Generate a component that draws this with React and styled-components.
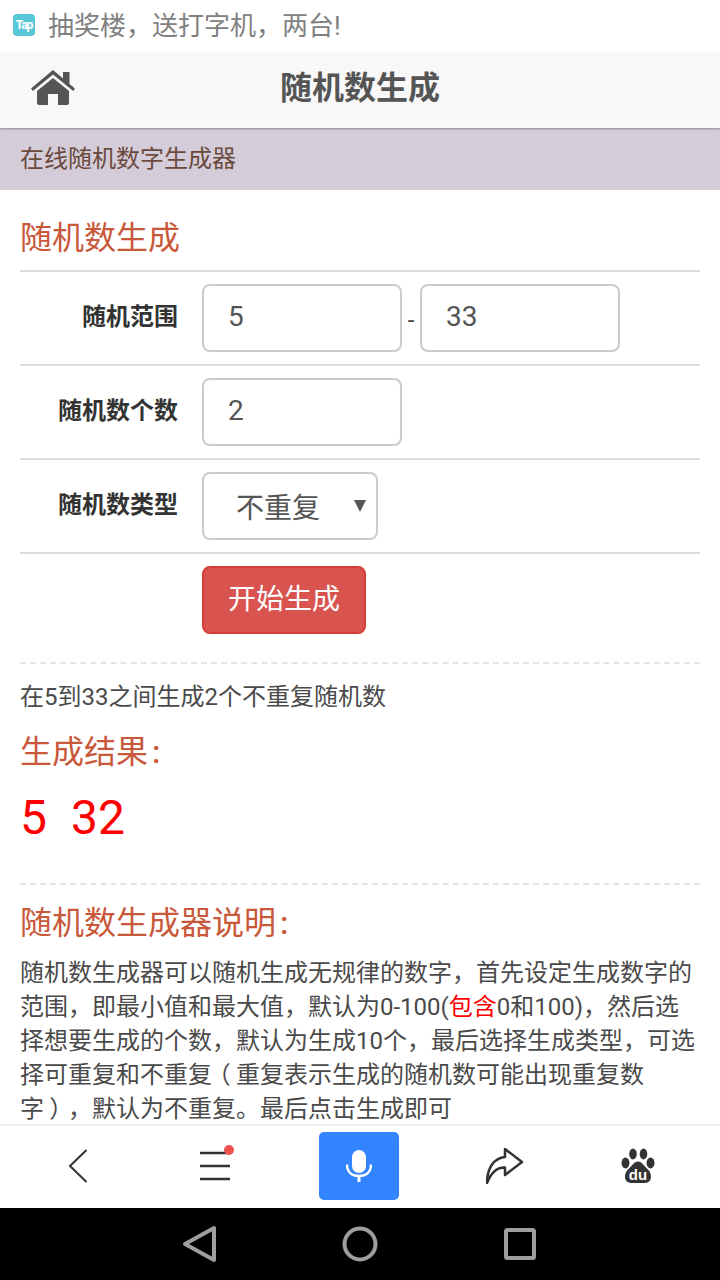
import React from "react";
import styled, { createGlobalStyle } from "styled-components";

const font = '"Roboto", "Noto Sans CJK SC", sans-serif';
const accent = '#c9583a';
const ruleColor = '#ddd';

const GlobalStyle = createGlobalStyle`
  html, body {
    margin: 0;
    padding: 0;
    background: #fff;
    font-family: ${font};
  }
  * { box-sizing: border-box; }
`;

const Page = styled.div`
  width: 720px;
  height: 1280px;
  display: flex;
  flex-direction: column;
  overflow: hidden;
  background: #fff;
`;

const AdBar = styled.div`
  height: 52px;
  flex: none;
  display: flex;
  align-items: center;
  gap: 13px;
  padding: 0 0 6px 13px;
  font-size: 26px;
  color: #808080;
`;

const TapLogo = styled.div`
  width: 22px;
  height: 22px;
  margin-top: 3px;
  border-radius: 4px;
  background: #58c8d8;
  color: #fff;
  font-size: 12px;
  font-weight: 700;
  letter-spacing: -1px;
  display: flex;
  align-items: center;
  justify-content: center;
`;

const Header = styled.div`
  height: 76px;
  flex: none;
  position: relative;
  z-index: 1;
  display: flex;
  align-items: center;
  justify-content: center;
  padding-bottom: 10px;
  background: #f8f8f8;
  box-shadow: 0 1px 2px rgba(0, 0, 0, 0.35);
  font-size: 32px;
  font-weight: 700;
  color: #555;
`;

const HomeLink = styled.a`
  position: absolute;
  left: 31px;
  top: 18px;
  display: block;
  line-height: 0;
`;

const SubTitle = styled.div`
  height: 62px;
  flex: none;
  display: flex;
  align-items: center;
  padding: 0 20px 6px;
  background: #d4ccd8;
  font-size: 24px;
  color: #6b4a3e;
`;

const Content = styled.div`
  flex: 1;
  min-height: 0;
  overflow: hidden;
  padding: 0 20px;
  color: #4a4a4a;
`;

const SectionTitle = styled.h2`
  margin: 0;
  font-size: 32px;
  font-weight: 400;
  line-height: 46px;
  color: ${accent};
`;

const Colon = styled.span`
  margin-left: 4px;
  font-weight: 500;
`;

const FormTitle = styled(SectionTitle)`
  padding: 25px 0 9px;
  height: 82px;
  border-bottom: 2px solid ${ruleColor};
`;

const FormRow = styled.div`
  height: 94px;
  display: flex;
  padding-top: 12px;
  border-bottom: ${(p) => (p.$last ? "none" : `2px solid ${ruleColor}`)};
`;

const Label = styled.label`
  width: 158px;
  padding-top: 16px;
  font-size: 24px;
  line-height: 34px;
  font-weight: 700;
  color: #333;
  text-align: right;
`;

const Fields = styled.div`
  margin-left: 24px;
  display: flex;
  align-items: flex-start;
`;

const NumberInput = styled.input`
  width: 200px;
  height: 68px;
  padding: 0 24px 4px;
  border: 2px solid #ccc;
  border-radius: 8px;
  background: #fff;
  font-family: ${font};
  font-size: 28px;
  color: #555;
  outline: none;
`;

const Dash = styled.span`
  width: 18px;
  padding-top: 19px;
  font-size: 24px;
  line-height: 34px;
  color: #444;
  text-align: center;
`;

const SelectWrap = styled.div`
  position: relative;
  width: 176px;
  height: 68px;
`;

const TypeSelect = styled.select`
  width: 100%;
  height: 100%;
  padding: 4px 0 0 32px;
  appearance: none;
  border: 2px solid #ccc;
  border-radius: 8px;
  background: #fff;
  font-family: ${font};
  font-size: 28px;
  color: #555;
  outline: none;
`;

const Caret = styled.span`
  position: absolute;
  right: 12px;
  top: 28px;
  width: 0;
  height: 0;
  border-left: 6px solid transparent;
  border-right: 6px solid transparent;
  border-top: 12px solid #555;
`;

const StartButton = styled.button`
  width: 164px;
  height: 68px;
  padding: 0 0 6px;
  border: 2px solid #d43f3a;
  border-radius: 8px;
  background: #d9534f;
  color: #fff;
  font-family: ${font};
  font-size: 28px;
`;

const Summary = styled.div`
  margin-top: 14px;
  padding-top: 16px;
  border-top: 2px dashed #e4e4e4;
  font-size: 24px;
  line-height: 34px;
`;

const ResultTitle = styled(SectionTitle)`
  margin-top: 15px;
`;

const Numbers = styled.div`
  display: flex;
  gap: 24px;
  height: 102px;
  padding: 10px 0 0;
  font-size: 48px;
  line-height: 66px;
  color: #f00;
`;

const Intro = styled.div`
  margin-top: 6px;
  padding-top: 15px;
  border-top: 2px dashed #e4e4e4;
`;

const Paragraph = styled.p`
  margin: 10px 0 0;
  font-size: 24px;
  line-height: 34px;
  text-spacing-trim: space-all;
`;

const Red = styled.span`
  color: #f00;
`;

// proportional glyph with padding, so the bracket sits mid-cell as in the shot
const Paren = styled.span`
  font-feature-settings: "palt";
  padding: 0 6px;
`;

const BrowserBar = styled.div`
  height: 84px;
  flex: none;
  display: grid;
  grid-template-columns: 156px 118px 170px 122px 144px;
  align-items: center;
  justify-items: center;
  padding-bottom: 2px;
  background: #fff;
  border-top: 2px solid #eee;
`;

const MenuWrap = styled.div`
  position: relative;
  line-height: 0;
`;

const Dot = styled.span`
  position: absolute;
  right: -4px;
  top: -5px;
  width: 10px;
  height: 10px;
  border-radius: 50%;
  background: #f0504e;
`;

const MicButton = styled.div`
  width: 80px;
  height: 68px;
  border-radius: 5px;
  background: #3385ff;
  display: flex;
  align-items: center;
  justify-content: center;
`;

const SystemNav = styled.div`
  height: 72px;
  flex: none;
  display: flex;
  align-items: center;
  justify-content: center;
  background: #000;
`;

const NavSlot = styled.div`
  width: 160px;
  display: flex;
  justify-content: center;
  line-height: 0;
`;

const Home = () => (
  <svg width="44" height="36" viewBox="0 0 44 36">
    <path fill="#555" d="M22 0 L32 8.5 V2 H38.5 V14 L44 18.6 L42.2 21 L22 4.4 L1.8 21 L0 18.6 Z" />
    <path fill="#555" d="M22 8 L38 21 V33 Q38 35 36 35 H27 V24 H17 V35 H8 Q6 35 6 33 V21 Z" />
  </svg>
);

const Back = () => (
  <svg width="20" height="36" viewBox="0 0 20 36">
    <path d="M18.5 2 L2 18 L18.5 34" fill="none" stroke="#333" strokeWidth="2" />
  </svg>
);

const Menu = () => (
  <svg width="30" height="32" viewBox="0 0 30 32">
    <path d="M0 3 H30 M0 16 H30 M0 29 H30" stroke="#333" strokeWidth="2.5" />
  </svg>
);

const Mic = () => (
  <svg width="26" height="32" viewBox="0 0 26 32">
    <rect x="6" y="0" width="14" height="23" rx="7" fill="#fff" />
    <path d="M1 14.5 C1 22 6 26 13 26 C20 26 25 22 25 14.5" fill="none" stroke="#fff" strokeWidth="2.5" />
    <rect x="11.5" y="26" width="3" height="6" fill="#fff" />
  </svg>
);

const Share = () => (
  <svg width="38" height="36" viewBox="0 0 38 36">
    <path
      d="M1 35 C1 20 8 10 19 9 V1 L36 14 L19 27 V19.5 C11 19 5 25 1 35 Z"
      fill="none"
      stroke="#333"
      strokeWidth="2.5"
      strokeLinejoin="round"
    />
  </svg>
);

const Paw = () => (
  <svg width="34" height="36" viewBox="0 0 34 36">
    <g fill="#333">
      <ellipse cx="12" cy="6" rx="3.8" ry="5.4" />
      <ellipse cx="22.5" cy="6" rx="3.8" ry="5.4" />
      <ellipse cx="4.5" cy="15" rx="4" ry="5.4" />
      <ellipse cx="29.5" cy="15" rx="4" ry="5.4" />
      <path d="M17 13.5 C21 13.5 23 18 26.5 21 C32 26 31 35 24 35 H10 C3 35 2 26 7.5 21 C11 18 13 13.5 17 13.5 Z" />
    </g>
    <text x="17" y="32" fontFamily="Liberation Sans, sans-serif" fontSize="15" fontWeight="700" fill="#fff" textAnchor="middle">du</text>
  </svg>
);

const NavBack = () => (
  <svg width="36" height="38" viewBox="0 0 36 38">
    <path d="M32 3 V35 L3 19 Z" fill="none" stroke="#9e9e9e" strokeWidth="4" strokeLinejoin="round" />
  </svg>
);

const NavHome = () => (
  <svg width="36" height="36" viewBox="0 0 36 36">
    <circle cx="18" cy="18" r="15.5" fill="none" stroke="#9e9e9e" strokeWidth="4" />
  </svg>
);

const NavRecent = () => (
  <svg width="32" height="32" viewBox="0 0 32 32">
    <rect x="2" y="2" width="28" height="28" rx="1.5" fill="none" stroke="#9e9e9e" strokeWidth="4" />
  </svg>
);

function App() {
  return (
    <Page>
      <GlobalStyle />
      <AdBar>
        <TapLogo>Tap</TapLogo>
        抽奖楼，送打字机，两台!
      </AdBar>
      <Header>
        <HomeLink><Home /></HomeLink>
        随机数生成
      </Header>
      <SubTitle>在线随机数字生成器</SubTitle>
      <Content>
        <FormTitle>随机数生成</FormTitle>
        <FormRow>
          <Label>随机范围</Label>
          <Fields>
            <NumberInput defaultValue="5" />
            <Dash>-</Dash>
            <NumberInput defaultValue="33" />
          </Fields>
        </FormRow>
        <FormRow>
          <Label>随机数个数</Label>
          <Fields>
            <NumberInput defaultValue="2" />
          </Fields>
        </FormRow>
        <FormRow>
          <Label>随机数类型</Label>
          <Fields>
            <SelectWrap>
              <TypeSelect defaultValue="no">
                <option value="no">不重复</option>
                <option value="yes">可重复</option>
              </TypeSelect>
              <Caret />
            </SelectWrap>
          </Fields>
        </FormRow>
        <FormRow $last>
          <Label />
          <Fields>
            <StartButton>开始生成</StartButton>
          </Fields>
        </FormRow>
        <Summary>在5到33之间生成2个不重复随机数</Summary>
        <ResultTitle>生成结果<Colon>:</Colon></ResultTitle>
        <Numbers>
          <span>5</span>
          <span>32</span>
        </Numbers>
        <Intro>
          <SectionTitle>随机数生成器说明<Colon>:</Colon></SectionTitle>
          <Paragraph>
            随机数生成器可以随机生成无规律的数字，首先设定生成数字的范围，即最小值和最大值，默认为0-100(<Red>包含</Red>0和100)，然后选择想要生成的个数，默认为生成10个，最后选择生成类型，可选择可重复和不重复<Paren>（</Paren>重复表示生成的随机数可能出现重复数字<Paren>）</Paren>，默认为不重复。最后点击生成即可
          </Paragraph>
        </Intro>
      </Content>
      <BrowserBar>
        <Back />
        <MenuWrap>
          <Menu />
          <Dot />
        </MenuWrap>
        <MicButton><Mic /></MicButton>
        <Share />
        <Paw />
      </BrowserBar>
      <SystemNav>
        <NavSlot><NavBack /></NavSlot>
        <NavSlot><NavHome /></NavSlot>
        <NavSlot><NavRecent /></NavSlot>
      </SystemNav>
    </Page>
  );
}

export default App;
